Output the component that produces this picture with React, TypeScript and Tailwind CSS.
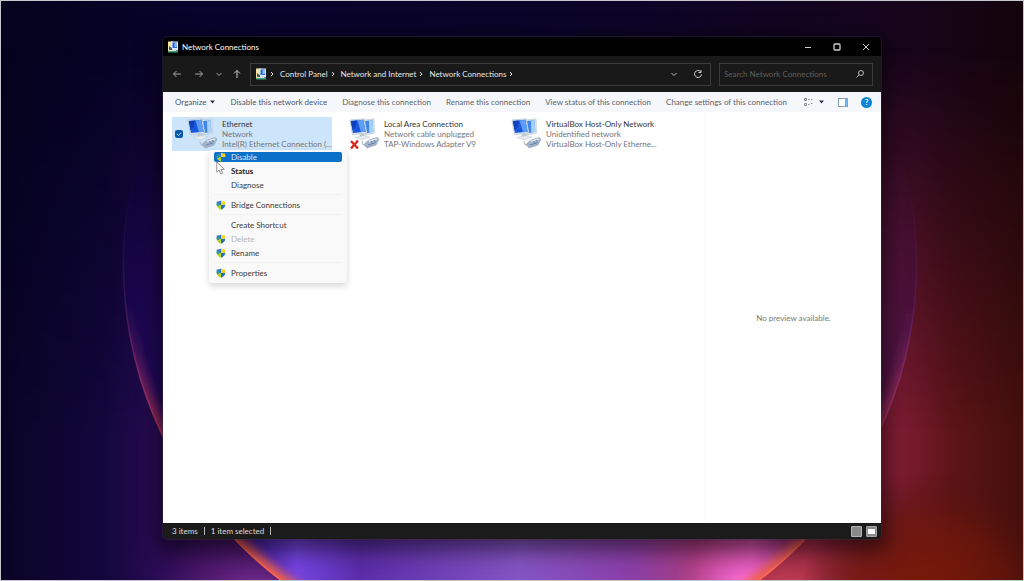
import type { ReactNode } from 'react'

type Connection = {
  id: string
  name: string
  status: string
  device: string
  selected?: boolean
  unplugged?: boolean
}

type MenuEntry = {
  label: string
  shield?: boolean
  active?: boolean
  bold?: boolean
  disabled?: boolean
  separatorBefore?: boolean
}

const CONNECTIONS: Connection[] = [
  {
    id: 'ethernet',
    name: 'Ethernet',
    status: 'Network',
    device: 'Intel(R) Ethernet Connection (...',
    selected: true,
  },
  {
    id: 'local',
    name: 'Local Area Connection',
    status: 'Network cable unplugged',
    device: 'TAP-Windows Adapter V9',
    unplugged: true,
  },
  {
    id: 'virtualbox',
    name: 'VirtualBox Host-Only Network',
    status: 'Unidentified network',
    device: 'VirtualBox Host-Only Etherne...',
  },
]

const MENU: MenuEntry[] = [
  { label: 'Disable', shield: true, active: true },
  { label: 'Status', bold: true },
  { label: 'Diagnose' },
  { label: 'Bridge Connections', shield: true, separatorBefore: true },
  { label: 'Create Shortcut', separatorBefore: true },
  { label: 'Delete', shield: true, disabled: true },
  { label: 'Rename', shield: true },
  { label: 'Properties', shield: true, separatorBefore: true },
]

const COMMANDS = [
  'Diagnose this connection',
  'Rename this connection',
  'View status of this connection',
  'Change settings of this connection',
]

const CRUMBS = ['Control Panel', 'Network and Internet', 'Network Connections']

function Wallpaper() {
  return (
    <svg
      className="absolute inset-0 h-full w-full"
      viewBox="0 0 1024 581"
      preserveAspectRatio="none"
      aria-hidden
    >
      <defs>
        <linearGradient id="top" x1="0" y1="0" x2="1" y2="0">
          <stop offset="0" stopColor="#04021c" />
          <stop offset="0.2" stopColor="#08032c" />
          <stop offset="0.6" stopColor="#0b0428" />
          <stop offset="0.88" stopColor="#17051c" />
          <stop offset="1" stopColor="#13040a" />
        </linearGradient>
        <linearGradient id="bottom" x1="0" y1="0" x2="1" y2="0">
          <stop offset="0" stopColor="#090426" />
          <stop offset="0.1" stopColor="#12073c" />
          <stop offset="0.15" stopColor="#280b52" />
          <stop offset="0.2" stopColor="#3a0f5a" />
          <stop offset="0.8" stopColor="#8a2040" />
          <stop offset="0.88" stopColor="#7e1c32" />
          <stop offset="0.93" stopColor="#5e1418" />
          <stop offset="1" stopColor="#430f0c" />
        </linearGradient>
        <linearGradient id="down" x1="0" y1="0" x2="0" y2="1">
          <stop offset="0.08" stopColor="#fff" stopOpacity="0" />
          <stop offset="0.75" stopColor="#fff" />
        </linearGradient>
        <linearGradient id="discFill" gradientUnits="userSpaceOnUse" x1="121" y1="0" x2="919" y2="0">
          <stop offset="0" stopColor="#180650" />
          <stop offset="0.14" stopColor="#2a0d80" />
          <stop offset="0.22" stopColor="#7444e0" />
          <stop offset="0.3" stopColor="#5a2ca8" />
          <stop offset="0.5" stopColor="#8455c4" />
          <stop offset="0.64" stopColor="#8a3fa8" />
          <stop offset="0.72" stopColor="#a83c80" />
          <stop offset="0.79" stopColor="#d050a8" />
          <stop offset="0.88" stopColor="#60184e" />
          <stop offset="1" stopColor="#3c0f44" />
        </linearGradient>
        <linearGradient id="discFade" x1="0" y1="0" x2="0" y2="1">
          <stop offset="0.25" stopColor="#fff" stopOpacity="0" />
          <stop offset="0.6" stopColor="#fff" stopOpacity="0.75" />
          <stop offset="1" stopColor="#fff" />
        </linearGradient>
        <linearGradient id="edge" gradientUnits="userSpaceOnUse" x1="0" y1="150" x2="0" y2="581">
          <stop offset="0.1" stopColor="#7a2a80" stopOpacity="0" />
          <stop offset="0.4" stopColor="#7a2a70" stopOpacity="0.4" />
          <stop offset="0.65" stopColor="#b8345c" stopOpacity="0.9" />
          <stop offset="0.88" stopColor="#e8503c" />
          <stop offset="1" stopColor="#ff6a50" />
        </linearGradient>
        <linearGradient id="edgeGlow" gradientUnits="userSpaceOnUse" x1="0" y1="300" x2="0" y2="581">
          <stop offset="0" stopColor="#7a2a70" stopOpacity="0" />
          <stop offset="0.4" stopColor="#a8305c" stopOpacity="0.8" />
          <stop offset="1" stopColor="#f0604c" />
        </linearGradient>
        <radialGradient id="rust">
          <stop offset="0" stopColor="#7c1a06" />
          <stop offset="0.6" stopColor="#6a1608" stopOpacity="0.7" />
          <stop offset="1" stopColor="#4a1008" stopOpacity="0" />
        </radialGradient>
        <radialGradient id="rose">
          <stop offset="0" stopColor="#c84058" />
          <stop offset="1" stopColor="#a02a38" stopOpacity="0" />
        </radialGradient>
        <radialGradient id="violet">
          <stop offset="0" stopColor="#8a38a0" />
          <stop offset="1" stopColor="#4a1470" stopOpacity="0" />
        </radialGradient>
        <radialGradient id="pink">
          <stop offset="0" stopColor="#ff70e0" />
          <stop offset="1" stopColor="#d050a8" stopOpacity="0" />
        </radialGradient>
        <mask id="downMask">
          <rect width="1024" height="581" fill="url(#down)" />
        </mask>
        <mask id="discMask">
          <rect width="1024" height="581" fill="url(#discFade)" />
        </mask>
        <clipPath id="disc">
          <circle cx="520" cy="264" r="398" />
        </clipPath>
        <filter id="soft" x="-10%" y="-10%" width="120%" height="120%">
          <feGaussianBlur stdDeviation="5" />
        </filter>
      </defs>
      <rect width="1024" height="581" fill="url(#top)" />
      <rect width="1024" height="581" fill="url(#bottom)" mask="url(#downMask)" />
      <ellipse cx="255" cy="600" rx="110" ry="75" fill="url(#violet)" />
      <ellipse cx="790" cy="590" rx="120" ry="80" fill="url(#rose)" />
      <ellipse cx="930" cy="600" rx="130" ry="130" fill="url(#rust)" />
      <g clipPath="url(#disc)">
        <g mask="url(#discMask)">
          <rect width="1024" height="581" fill="url(#discFill)" />
          <ellipse cx="745" cy="585" rx="70" ry="50" fill="url(#pink)" />
        </g>
        <circle cx="520" cy="264" r="398" fill="none" stroke="url(#edgeGlow)" strokeWidth="16" filter="url(#soft)" />
        <circle cx="520" cy="264" r="398" fill="none" stroke="url(#edge)" strokeWidth="3" />
      </g>
    </svg>
  )
}

function PanelIcon() {
  return (
    <svg className="h-[12px] w-[12px] shrink-0" viewBox="0 0 12 12" aria-hidden>
      <rect x="1" y="0.5" width="5" height="9.5" fill="#f1e3a6" />
      <rect x="4" y="0.5" width="7" height="9" fill="#dcecff" />
      <rect x="5.500" y="1.500" width="4.500" height="5.500" fill="#2362d8" />
      <path d="M7.500 2.500l2.500-1v4L7.500 6.500z" fill="#8fbcff" />
      <path d="M2 5l3 2v2H2z" fill="#4d5a6a" />
      <rect x="5" y="8" width="4" height="2" fill="#d5dbe2" />
      <rect x="1" y="10" width="10" height="1.500" fill="#3ba07a" />
    </svg>
  )
}

function AdapterIcon({ unplugged }: { unplugged?: boolean }) {
  return (
    <svg className="h-[32px] w-[32px] shrink-0" viewBox="0 0 32 32" aria-hidden>
      {/* rear monitor */}
      <path d="M14 2l11-1 .5 14-9 2z" fill="#dfe8f1" stroke="#b4c2d0" strokeWidth="0.6" />
      <path d="M16 3l7.500-.8.8 11.500-6.500 1.500z" fill="#3f86ea" />
      <path d="M20 2.700l3.500-.5.8 11.500-4 .9z" fill="#a9d0fa" />
      {/* front monitor */}
      <path d="M1 2l14-1.200 3 14.200-14.500 1.500z" fill="#e4edf6" stroke="#a6b5c6" strokeWidth="0.6" />
      <path d="M1.800 3l12.500-1.200 2.400 12L4 15z" fill="#1b57dc" />
      <path d="M8.500 2.400l5.800-.6 2.400 12-4.700.4z" fill="#5d9df5" />
      <path d="M1.800 3l6-.6L6.500 9l-3 3z" fill="#0f41bd" />
      <path d="M10 16.500l5-.8 2 3-5 1z" fill="#b9c4cf" />
      <path d="M6 19.500l9-2 6 1.500-8 3z" fill="#e4e9ee" stroke="#c3cbd4" strokeWidth="0.5" />
      {/* cable and plug */}
      <path d="M13 23c0 3 1 4 3 4" fill="none" stroke="#b7c0ca" strokeWidth="1.200" />
      <path d="M15 26.500l4-4 9-3 2 1.500-3 6-9 3z" fill="#a3b4c7" stroke="#8b9aac" strokeWidth="0.6" />
      <path d="M19 22.700l8.500-2.500 1.500 1-8.500 2.900z" fill="#e0e9f2" />
      <path d="M19 27l7-2M22 22.800l2 2.500M25 22l1.500 2.500" stroke="#5f7fae" strokeWidth="0.9" />
      {unplugged ? (
        <path d="M2 23l7 7.500M9 22.500l-7 8" stroke="#d92a1c" strokeWidth="2.400" />
      ) : null}
    </svg>
  )
}

function ShieldIcon() {
  return (
    <svg className="h-[10px] w-[10px]" viewBox="0 0 10 10" aria-hidden>
      <path d="M5 .5C3.800 1.300 2 1.600.7 1.500V5H5z" fill="#2c7cc9" />
      <path d="M5 .5c1.200.8 3 1.100 4.300 1V5H5z" fill="#f3d32b" />
      <path d="M.7 5C.9 7.400 3 9 5 9.800V5z" fill="#b9cf2b" />
      <path d="M9.300 5C9.100 7.400 7 9 5 9.800V5z" fill="#1f74be" />
      <path d="M.7 3.500h2.500V6H.8z" fill="#3a9c86" />
    </svg>
  )
}

function Stroke({ d }: { d: string }) {
  return (
    <svg width="10" height="10" viewBox="0 0 10 10" fill="none" stroke="currentColor" aria-hidden>
      <path d={d} />
    </svg>
  )
}

function Caret() {
  return (
    <svg width="5" height="4" viewBox="0 0 5 4" aria-hidden>
      <path d="M0 .5h5L2.500 3.500z" fill="#2a3350" />
    </svg>
  )
}

function IconButton({ label, className, children }: { label: string; className?: string; children?: ReactNode }) {
  return (
    <button type="button" aria-label={label} className={`flex items-center justify-center ${className ?? ''}`}>
      {children}
    </button>
  )
}

function TitleBar() {
  return (
    <header className="flex h-[19px] items-center bg-black pr-px pl-[4px] text-white">
      <PanelIcon />
      <h1 className="ml-[3px] flex-1">Network Connections</h1>
      <IconButton label="Minimize" className="h-full w-[29px] text-[#d0d0d0]">
        <Stroke d="M2 5.500h6" />
      </IconButton>
      <IconButton label="Maximize" className="h-full w-[29px] text-[#d0d0d0]">
        <svg width="10" height="10" viewBox="0 0 10 10" fill="none" stroke="currentColor" aria-hidden>
          <rect x="2" y="2" width="6" height="6" rx="1" strokeWidth="1.300" />
        </svg>
      </IconButton>
      <IconButton label="Close" className="h-full w-[29px] text-[#d0d0d0]">
        <Stroke d="M2 2l6 6M8 2l-6 6" />
      </IconButton>
    </header>
  )
}

function AddressBar() {
  return (
    <div className="flex h-[36px] items-center bg-[#191919] px-[8px] text-[#e6e6e6]">
      <nav className="flex w-[79px] items-center" aria-label="History">
        <IconButton label="Back" className="w-[12px] text-[#a8a8a8]">
          <Stroke d="M9 5H1.500M4.500 2l-3 3 3 3" />
        </IconButton>
        <IconButton label="Forward" className="ml-[10px] w-[12px] text-[#a8a8a8]">
          <Stroke d="M1 5h7.500M5.500 2l3 3-3 3" />
        </IconButton>
        <IconButton label="Recent locations" className="ml-[8px] w-[12px] text-[#a8a8a8]">
          <Stroke d="M2.500 4L5 6.500 7.500 4" />
        </IconButton>
        <IconButton label="Up" className="ml-[6px] w-[12px] text-[#c8c8c8]">
          <Stroke d="M5 9V1.500M2 4.500l3-3 3 3" />
        </IconButton>
      </nav>

      <div className="flex h-[23px] flex-1 items-center border border-[#3c3c3c] pr-[6px] pl-[4px]">
        <PanelIcon />
        <span className="flex">
          <Stroke d="M4 3l2 2-2 2" />
        </span>
        <ol className="flex flex-1 items-center">
          {CRUMBS.map((crumb) => (
            <li key={crumb} className="flex items-center">
              <a href="#" className="ml-[3px]">
                {crumb}
              </a>
              <span className="flex">
                <Stroke d="M4 3l2 2-2 2" />
              </span>
            </li>
          ))}
        </ol>
        <IconButton label="Previous locations" className="w-[12px] text-[#b8b8b8]">
          <Stroke d="M2.500 4L5 6.500 7.500 4" />
        </IconButton>
        <IconButton label="Refresh" className="ml-[12px] w-[12px] text-[#d0d0d0]">
          <Stroke d="M7.500 2.500A3.500 3.500 0 1 0 8.500 5.500M8 1v2.500H5.500" />
        </IconButton>
      </div>

      <div className="ml-[8px] flex h-[23px] w-[154px] items-center border border-[#3c3c3c] pr-[6px] pl-[4px]">
        <input
          type="search"
          aria-label="Search Network Connections"
          placeholder="Search Network Connections"
          className="min-w-0 flex-1 bg-transparent outline-none placeholder:text-[#5e5e5e]"
        />
        <IconButton label="Search" className="w-[12px] text-[#b8b8b8]">
          <svg width="10" height="10" viewBox="0 0 10 10" fill="none" stroke="currentColor" aria-hidden>
            <circle cx="6" cy="4" r="2.500" />
            <path d="M4.200 5.800L1.500 8.500" />
          </svg>
        </IconButton>
      </div>
    </div>
  )
}

function CommandBar() {
  return (
    <div className="flex h-[20px] items-center gap-[15px] bg-[#f5f7fa] pr-[9px] pl-[12px] whitespace-nowrap text-[#60646c]">
      <button type="button" className="flex items-center gap-[4px] text-[#475773]">
        Organize
        <Caret />
      </button>
      <button type="button" className="text-[#475773]">
        Disable this network device
      </button>
      {COMMANDS.map((command) => (
        <button key={command} type="button">
          {command}
        </button>
      ))}
      <div className="ml-auto flex items-center">
        <button type="button" aria-label="Change your view" className="flex items-center gap-[6px]">
          <svg width="10" height="10" viewBox="0 0 10 10" fill="none" stroke="#8b8f96" aria-hidden>
            <path d="M1.500 1.500h2v2h-2zM1.500 6.500h2v2h-2z" />
            <path d="M5 2.500h1.500M5 7.500h1.500M8 2.500h1.500M8 6.500h1.500" />
          </svg>
          <Caret />
        </button>
        <IconButton label="Preview pane" className="ml-[14px]">
          <svg width="10" height="9" viewBox="0 0 10 9" aria-hidden>
            <rect x="0.500" y="0.500" width="9" height="8" fill="#fff" stroke="#8f9eae" />
            <rect x="7" y="1" width="2.500" height="7.500" fill="#6eb2e8" />
          </svg>
        </IconButton>
        <IconButton
          label="Get help"
          className="ml-[13px] h-[11px] w-[11px] rounded-full bg-[#0a84d6] font-bold text-white"
        >
          ?
        </IconButton>
      </div>
    </div>
  )
}

function ContextMenu() {
  return (
    <ul
      role="menu"
      className="absolute top-[33px] left-[37px] z-10 w-[138px] rounded-[3px] bg-[#f9f9f9] px-[5px] pb-[3px] shadow-[0_3px_6px_rgba(0,0,0,0.16)]"
    >
      {MENU.map((entry) => (
        <li key={entry.label} role="none">
          {entry.separatorBefore ? <div className="mt-[2px] mb-[3px] h-px bg-[#f1f1f1]" /> : null}
          <button
            type="button"
            role="menuitem"
            disabled={entry.disabled}
            className="flex h-[14px] w-full items-center text-left text-[#3a3a3a] disabled:text-[#b5b5b5]"
          >
            <span
              className={`flex h-[10px] w-full items-center rounded-[2px] pl-[2px] ${
                entry.active ? 'bg-[#0a70c8] text-[#d8ecff]' : ''
              } ${entry.bold ? 'font-bold text-[#222]' : ''}`}
            >
              <span className="mr-[5px] w-[10px]">{entry.shield ? <ShieldIcon /> : null}</span>
              {entry.label}
            </span>
          </button>
        </li>
      ))}
    </ul>
  )
}

function Cursor() {
  return (
    <svg className="absolute top-[44px] left-[44px] z-20" width="9" height="14" viewBox="0 0 9 14" aria-hidden>
      <path
        d="M.8.8v10.400l2.400-2.200 1.700 4 1.700-.7-1.700-3.900h3.300z"
        fill="#fff"
        stroke="#777"
        strokeWidth="0.800"
      />
    </svg>
  )
}

function ConnectionTile({ connection }: { connection: Connection }) {
  const { id, name, status, device, selected, unplugged } = connection
  return (
    <li className={`relative w-[160px] ${selected ? 'bg-[#cce5fb]' : ''}`}>
      <label htmlFor={id} className="flex h-[34px] items-center pl-[3px]">
        <span className="relative flex h-[8px] w-[8px] shrink-0">
          <input
            id={id}
            type="checkbox"
            defaultChecked={selected}
            className="h-[8px] w-[8px] appearance-none rounded-[2px] checked:bg-[#0a5cab]"
          />
          {selected ? (
            <svg className="absolute inset-0" width="8" height="8" viewBox="0 0 8 8" fill="none" aria-hidden>
              <path d="M2 4l1.500 1.500L6 2.800" stroke="#b9dcfa" />
            </svg>
          ) : null}
        </span>
        <span className="mr-[3px] ml-[4px] flex">
          <AdapterIcon unplugged={unplugged} />
        </span>
        <span className="block whitespace-nowrap text-[#74767a]">
          <span className="block text-[#33363b]">{name}</span>
          <span className="block">{status}</span>
          <span className="block">{device}</span>
        </span>
      </label>
      {selected ? (
        <>
          <ContextMenu />
          <Cursor />
        </>
      ) : null}
    </li>
  )
}

function StatusBar() {
  return (
    <footer className="flex h-[16px] items-center bg-[#1b1b1b] pr-[4px] pl-[9px] text-[#dcdcdc]">
      <span>3 items</span>
      <span className="mx-[6px] h-[8px] w-px bg-[#b5b5b5]" />
      <span>1 item selected</span>
      <span className="ml-[6px] h-[8px] w-px bg-[#b5b5b5]" />
      <div className="ml-auto flex gap-[4px]">
        <IconButton
          label="Details view"
          className="h-[11px] w-[11px] rounded-[1px] border border-[#b5b5b5] bg-[#8a8a8a]"
        />
        <IconButton
          label="Large icons view"
          className="h-[11px] w-[11px] rounded-[1px] border border-[#a5a5a5] bg-[#8a8a8a]"
        >
          <span className="h-[5px] w-[7px] bg-white" />
        </IconButton>
      </div>
    </footer>
  )
}

export default function App() {
  return (
    <div className="relative flex min-h-screen flex-col overflow-hidden border border-[#c9c5cf] bg-[#07042a] pt-[36px] pr-[142px] pb-[41px] pl-[162px] font-[Lato,sans-serif] text-[8px] leading-[10px]">
      <Wallpaper />
      <main className="relative flex flex-1 flex-col overflow-hidden rounded-[4px] shadow-[0_0_0_1px_rgba(60,50,70,0.4),0_6px_20px_6px_rgba(0,0,0,0.5)]">
        <TitleBar />
        <AddressBar />
        <CommandBar />
        <div className="flex flex-1 bg-white">
          <ul className="flex flex-1 items-start gap-[2px] pt-[5px] pl-[9px]">
            {CONNECTIONS.map((connection) => (
              <ConnectionTile key={connection.id} connection={connection} />
            ))}
          </ul>
          <aside className="flex w-[176px] items-center justify-center border-l border-[#fafafa] text-[#777]">
            No preview available.
          </aside>
        </div>
        <StatusBar />
      </main>
    </div>
  )
}
